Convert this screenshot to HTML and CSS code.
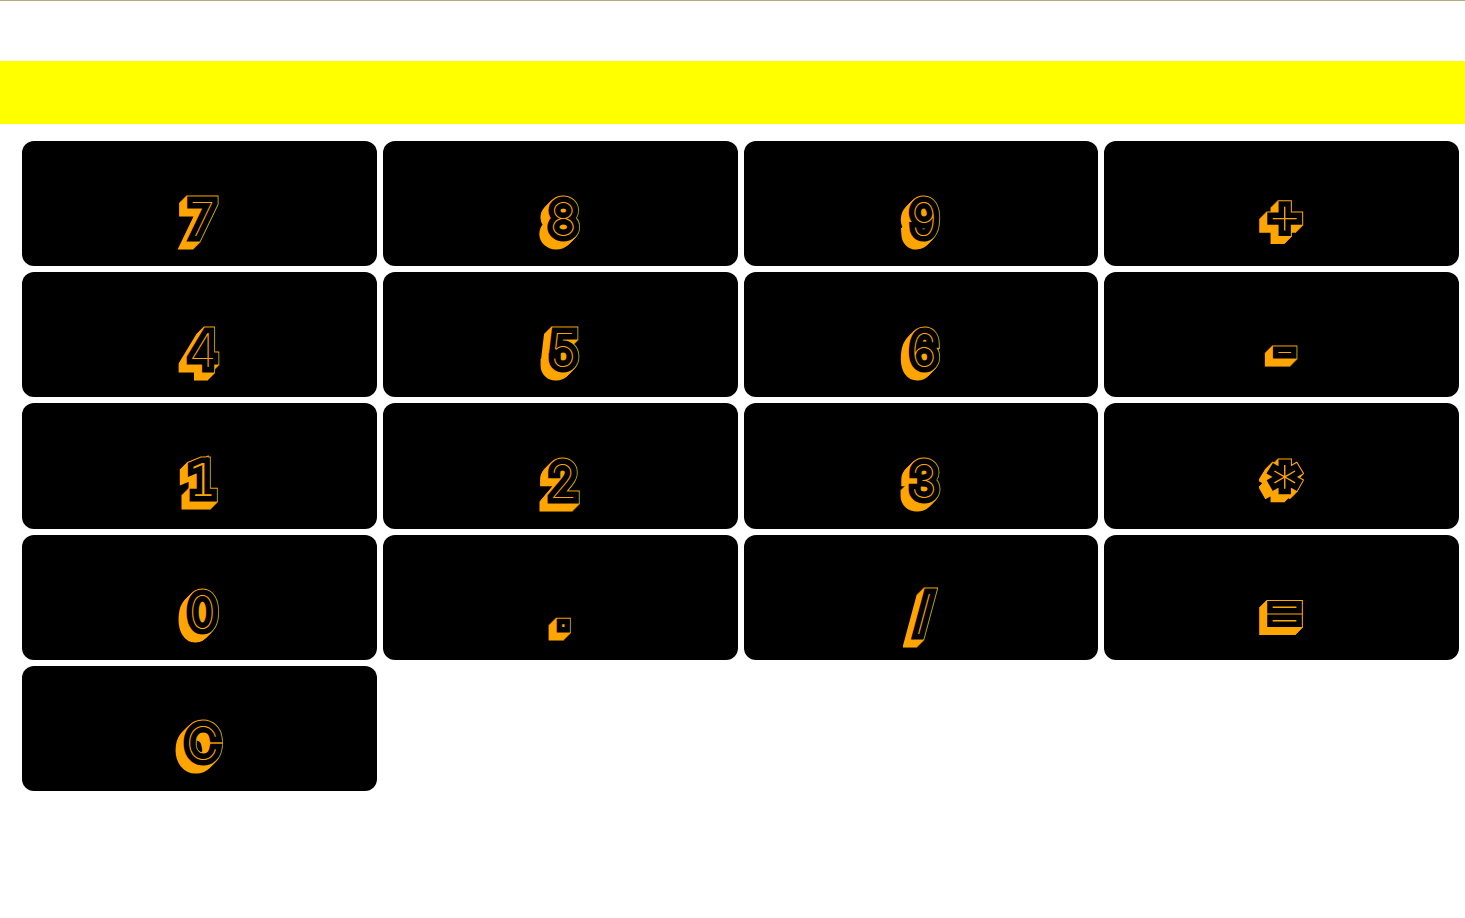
FILE: index.html
```html
<!DOCTYPE html>
<html lang="en">
<head>
<meta charset="utf-8">
<title>Calculator</title>
<link rel="stylesheet" href="styles.css">
</head>
<body>
<header class="top"></header>
<output class="display" aria-label="Result"></output>
<main class="keys">
<button class="key" type="button"><span class="face" data-key="7">7</span></button>
<button class="key" type="button"><span class="face" data-key="8">8</span></button>
<button class="key" type="button"><span class="face" data-key="9">9</span></button>
<button class="key key-plus" type="button"><span class="face" data-key="+">+</span></button>
<button class="key" type="button"><span class="face" data-key="4">4</span></button>
<button class="key" type="button"><span class="face" data-key="5">5</span></button>
<button class="key" type="button"><span class="face" data-key="6">6</span></button>
<button class="key" type="button"><span class="face" data-key="-">-</span></button>
<button class="key key-slab" type="button"><span class="face" data-key="1">1</span></button>
<button class="key" type="button"><span class="face" data-key="2">2</span></button>
<button class="key" type="button"><span class="face" data-key="3">3</span></button>
<button class="key key-star" type="button"><span class="face" data-key="*">*</span></button>
<button class="key" type="button"><span class="face" data-key="0">0</span></button>
<button class="key key-slab" type="button"><span class="face" data-key=".">.</span></button>
<button class="key" type="button"><span class="face" data-key="/">/</span></button>
<button class="key key-equals" type="button"><span class="face" data-key="=">=</span></button>
<button class="key" type="button"><span class="face" data-key="C">C</span></button>
</main>
</body>
</html>
```

FILE: styles.css
```css
body {
  margin: 0;
  background: #fff;
}

.top {
  height: 60px;
  border-top: 1px solid #b5aa85;
}

.display {
  display: block;
  height: 63px;
  background: #ff0;
}

.keys {
  display: grid;
  grid-template-columns: repeat(4, 1fr);
  grid-template-rows: repeat(5, 1fr);
  gap: 6px;
  min-height: 650px;
  padding: 17px 6px 0 22px;
}

.key {
  display: flex;
  align-items: center;
  justify-content: center;
  padding: 30px 0 0 6px;
  border: 0;
  border-radius: 12px;
  background: #000;
  color: orange;
  font: 100 46px/56px Inter, sans-serif;
}

.key-slab {
  font: 200 44px/56px "DejaVu Sans", sans-serif;
}

.key-plus {
  padding-top: 20px;
  font-size: 58px;
}

.key-star {
  padding-top: 40px;
  font-size: 58px;
}

.key-equals {
  padding-top: 24px;
  font-size: 70px;
}

/* Thin strokes of the letter itself, over a black body with an orange rim */
.face {
  position: relative;
  isolation: isolate;
}

.face::before,
.face::after {
  content: attr(data-key);
  position: absolute;
  inset: 0;
}

.face::before {
  z-index: -2;
  -webkit-text-stroke: 13px orange;
  filter: drop-shadow(-1px 1px orange) drop-shadow(-2px 2px orange)
    drop-shadow(-4px 4px orange);
}

.face::after {
  z-index: -1;
  color: #000;
  -webkit-text-stroke: 11px #000;
}
```
